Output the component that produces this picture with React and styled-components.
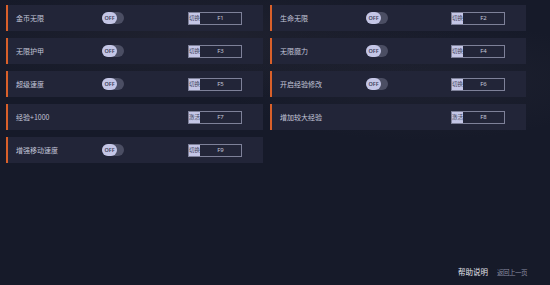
import styled, { createGlobalStyle } from "styled-components";

const GlobalStyle = createGlobalStyle`
  html, body {
    margin: 0;
    padding: 0;
    background: #161a29;
  }
  body {
    font-family: "Noto Sans CJK SC", "Noto Sans", sans-serif;
  }
`;

const Page = styled.div`
  width: 550px;
  height: 285px;
  box-sizing: border-box;
  display: flex;
  flex-direction: column;
  padding: 5px 0 0 6px;
  background:
    radial-gradient(ellipse 260px 60px at 200px 40px, rgba(40, 40, 52, 0.55), transparent),
    radial-gradient(ellipse 200px 60px at 420px 80px, rgba(38, 40, 54, 0.5), transparent),
    #161a29;
  overflow: hidden;
`;

const Grid = styled.div`
  display: grid;
  grid-template-columns: 257px 256px;
  column-gap: 7px;
  row-gap: 7px;
`;

const Card = styled.div`
  height: 26px;
  box-sizing: border-box;
  display: flex;
  align-items: center;
  background: #222538;
  border-left: 2px solid #d9602a;
  padding-left: 8px;
`;

const Label = styled.div`
  width: 86px;
  font-size: 7px;
  color: #c3c5d8;
  white-space: nowrap;
`;

const Toggle = styled.div`
  width: 22px;
  height: 12px;
  border-radius: 6px;
  background: #4b4e63;
  display: flex;
  visibility: ${(p) => (p.$hidden ? "hidden" : "visible")};
`;

const Knob = styled.div`
  width: 15px;
  height: 12px;
  border-radius: 6px;
  background: #c4c6e6;
  color: #3b3e58;
  font-family: "Noto Sans", sans-serif;
  font-size: 5.5px;
  font-weight: 600;
  display: flex;
  align-items: center;
  justify-content: center;
`;

const KeyBox = styled.div`
  margin-left: ${(p) => p.$gap}px;
  width: 54px;
  height: 13px;
  box-sizing: border-box;
  border: 1px solid #7e8199;
  display: flex;
  align-items: stretch;
`;

const KeyTag = styled.div`
  width: 11px;
  background: #c4c6e6;
  color: #3b3e58;
  font-size: 5.5px;
  display: flex;
  align-items: center;
  justify-content: center;
  white-space: nowrap;
  overflow: hidden;
`;

const KeyName = styled.div`
  flex: 1;
  color: #c3c5d8;
  font-family: "Noto Sans", sans-serif;
  font-size: 6px;
  display: flex;
  align-items: center;
  justify-content: center;
`;

const Footer = styled.div`
  margin-top: auto;
  display: flex;
  align-items: center;
  justify-content: flex-end;
  gap: 9px;
  padding: 0 23px 8px 0;
`;

const FooterLink = styled.div`
  font-size: ${(p) => (p.$dim ? "6.5px" : "7.5px")};
  letter-spacing: ${(p) => (p.$dim ? "-0.5px" : "0")};
  color: ${(p) => (p.$dim ? "#8a8ca0" : "#e2e3ec")};
`;

const rows = [
  { name: "金币无限", tag: "切换", key: "F1", toggle: true },
  { name: "生命无限", tag: "切换", key: "F2", toggle: true },
  { name: "无限护甲", tag: "切换", key: "F3", toggle: true },
  { name: "无限魔力", tag: "切换", key: "F4", toggle: true },
  { name: "超级速度", tag: "切换", key: "F5", toggle: true },
  { name: "开启经验修改", tag: "切换", key: "F6", toggle: true },
  { name: "经验+1000", tag: "激活", key: "F7", toggle: false },
  { name: "增加较大经验", tag: "激活", key: "F8", toggle: false },
  { name: "增强移动速度", tag: "切换", key: "F9", toggle: true },
];

export default function App() {
  return (
    <Page>
      <GlobalStyle />
      <Grid>
        {rows.map((r, i) => (
          <Card key={r.key}>
            <Label>{r.name}</Label>
            <Toggle $hidden={!r.toggle}>
              <Knob>OFF</Knob>
            </Toggle>
            <KeyBox $gap={i % 2 === 0 ? 64 : 63}>
              <KeyTag>{r.tag}</KeyTag>
              <KeyName>{r.key}</KeyName>
            </KeyBox>
          </Card>
        ))}
      </Grid>
      <Footer>
        <FooterLink>帮助说明</FooterLink>
        <FooterLink $dim>返回上一页</FooterLink>
      </Footer>
    </Page>
  );
}
